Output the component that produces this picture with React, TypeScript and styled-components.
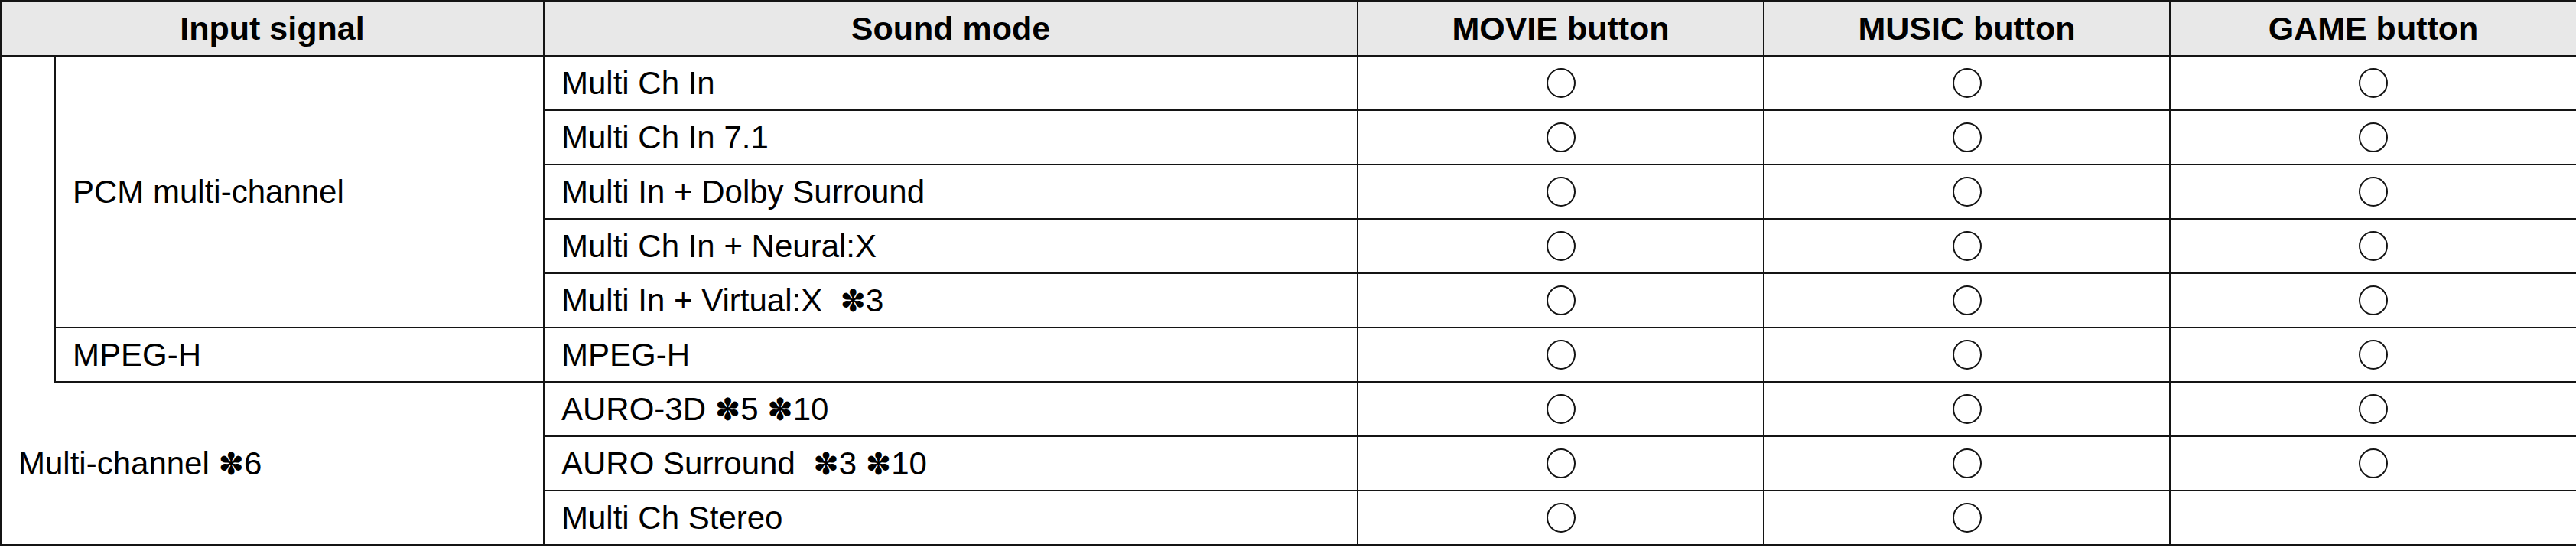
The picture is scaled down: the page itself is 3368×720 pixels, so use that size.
import React from 'react';
import styled, { createGlobalStyle } from 'styled-components';

const Global = createGlobalStyle`
  html, body { margin: 0; padding: 0; background: #ffffff; }
  body { font-family: "Liberation Sans", Arial, sans-serif; color: #000; }
`;

const Table = styled.table`
  width: 3368px;
  table-layout: fixed;
  border-collapse: collapse;
  font-family: "Liberation Sans", Arial, sans-serif;
  font-size: 42px;
  color: #000;
`;

const HeadRow = styled.tr`
  height: 72px;
`;

const Row = styled.tr`
  height: 71px;
`;

const HeadCell = styled.th`
  background: #e8e8e8;
  border: 2px solid #141414;
  font-weight: 700;
  font-size: 43px;
  text-align: center;
  vertical-align: middle;
  padding: 0;
  white-space: nowrap;
`;

const Cell = styled.td<{ $noTop?: boolean; $noBottom?: boolean }>`
  border: 2px solid #141414;
  ${(p) => (p.$noTop ? 'border-top: none;' : '')}
  ${(p) => (p.$noBottom ? 'border-bottom: none;' : '')}
  padding: 0 0 0 22px;
  vertical-align: middle;
  white-space: nowrap;
`;

const MarkCell = styled.td`
  border: 2px solid #141414;
  padding: 0;
  vertical-align: middle;
`;

const Circle = styled.span`
  display: block;
  width: 34px;
  height: 35px;
  margin: 0 auto;
  border: 2px solid #141414;
  border-radius: 50%;
`;

const Note = styled.span`
  font-family: "DejaVu Sans", sans-serif;
  font-size: 40px;
`;

type ModeRow = { mode: string; notes?: string[]; gap?: number; marks: boolean[] };

const rows: ModeRow[] = [
  { mode: 'Multi Ch In', marks: [true, true, true] },
  { mode: 'Multi Ch In 7.1', marks: [true, true, true] },
  { mode: 'Multi In + Dolby Surround', marks: [true, true, true] },
  { mode: 'Multi Ch In + Neural:X', marks: [true, true, true] },
  { mode: 'Multi In + Virtual:X', notes: ['3'], gap: 2, marks: [true, true, true] },
  { mode: 'MPEG-H', marks: [true, true, true] },
  { mode: 'AURO-3D', notes: ['5', '10'], gap: 1, marks: [true, true, true] },
  { mode: 'AURO Surround', notes: ['3', '10'], gap: 2, marks: [true, true, true] },
  { mode: 'Multi Ch Stereo', marks: [true, true, false] },
];

const Star = ({ n }: { n: string }) => (
  <>
    <Note>✽</Note>
    {n}
  </>
);

const ModeText = ({ r }: { r: ModeRow }) => (
  <>
    {r.mode}
    {r.notes &&
      r.notes.map((n, i) => (
        <React.Fragment key={i}>
          {i === 0 ? '\u00a0'.repeat(r.gap ?? 1) : '\u00a0'}
          <Star n={n} />
        </React.Fragment>
      ))}
  </>
);

export default function App() {
  return (
    <>
      <Global />
      <Table>
        <colgroup>
          <col style={{ width: 71 }} />
          <col style={{ width: 639 }} />
          <col style={{ width: 1064 }} />
          <col style={{ width: 531 }} />
          <col style={{ width: 531 }} />
          <col style={{ width: 532 }} />
        </colgroup>
        <thead>
          <HeadRow>
            <HeadCell colSpan={2}>Input signal</HeadCell>
            <HeadCell>Sound mode</HeadCell>
            <HeadCell>MOVIE button</HeadCell>
            <HeadCell>MUSIC button</HeadCell>
            <HeadCell>GAME button</HeadCell>
          </HeadRow>
        </thead>
        <tbody>
          {rows.map((r, i) => (
            <Row key={i}>
              {i === 0 && <Cell rowSpan={6} $noBottom />}
              {i === 0 && <Cell rowSpan={5}>PCM multi-channel</Cell>}
              {i === 5 && <Cell>MPEG-H</Cell>}
              {i === 6 && (
                <Cell rowSpan={3} colSpan={2} $noTop>
                  Multi-channel&nbsp;<Star n="6" />
                </Cell>
              )}
              <Cell>
                <ModeText r={r} />
              </Cell>
              {r.marks.map((m, j) => (
                <MarkCell key={j}>{m && <Circle />}</MarkCell>
              ))}
            </Row>
          ))}
        </tbody>
      </Table>
    </>
  );
}
